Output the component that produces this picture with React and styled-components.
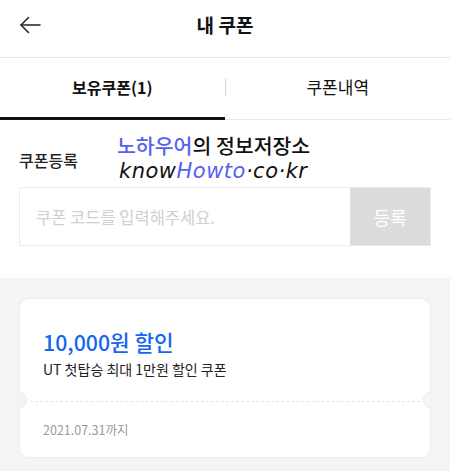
import React from "react";
import styled, { createGlobalStyle } from "styled-components";

const Global = createGlobalStyle`
  html, body { margin: 0; padding: 0; background: #f4f4f4; }
  body { font-family: "Noto Sans CJK KR", "Noto Sans", sans-serif; color: #111; }
  * { box-sizing: border-box; }
`;

const Page = styled.div`
  width: 450px;
  min-height: 471px;
  background: #f4f4f4;
  display: flex;
  flex-direction: column;
`;

const Header = styled.header`
  height: 58px;
  background: #fff;
  border-bottom: 1px solid #e6e6e6;
  display: flex;
  align-items: center;
  justify-content: center;
  position: relative;
`;

const BackButton = styled.button`
  position: absolute;
  left: 16px;
  top: 11px;
  width: 28px;
  height: 28px;
  padding: 0;
  border: 0;
  background: none;
  display: flex;
  align-items: center;
  justify-content: center;
`;

const Title = styled.h1`
  margin: 0 0 9px;
  font-size: 19px;
  font-weight: 700;
  color: #111;
`;

const Tabs = styled.nav`
  height: 62px;
  background: #fff;
  display: flex;
  align-items: stretch;
  position: relative;
  border-bottom: 1px solid #e8e8e8;
`;

const Tab = styled.div`
  flex: 1;
  display: flex;
  align-items: center;
  justify-content: center;
  font-size: ${(p) => (p.$active ? "16px" : "17px")};
  padding-bottom: 2px;
  font-weight: ${(p) => (p.$active ? 700 : 400)};
  color: #111;
  border-bottom: 3px solid ${(p) => (p.$active ? "#111" : "transparent")};
  margin-bottom: -1px;
`;

const TabDivider = styled.span`
  width: 1px;
  height: 18px;
  background: #d8d8d8;
  align-self: center;
  margin-top: -3px;
`;

const Register = styled.section`
  background: #fff;
  padding: 30px 19px 32px;
  position: relative;
`;

const Label = styled.div`
  font-size: 16px;
  font-weight: 500;
  color: #222;
  line-height: 20px;
  margin-bottom: 17px;
`;

const Watermark = styled.div`
  position: absolute;
  left: 117px;
  top: 11px;
  display: flex;
  flex-direction: column;
  align-items: flex-start;
  pointer-events: none;
`;

const WmTop = styled.div`
  font-size: 20.5px;
  line-height: 28px;
  color: #111;
  font-weight: 500;
`;

const WmBlue = styled.span`
  color: #5661f0;
`;

const WmBottom = styled.div`
  font-family: "DejaVu Sans", sans-serif;
  font-style: italic;
  font-weight: 300;
  font-size: 21px;
  line-height: 24px;
  letter-spacing: 0.5px;
  color: #111;
  margin-left: 2px;
`;

const InputRow = styled.div`
  display: flex;
  height: 59px;
  border: 1px solid #ececec;
`;

const Input = styled.input`
  flex: 1;
  border: 0;
  outline: none;
  padding: 0 16px;
  font-family: inherit;
  font-size: 16.5px;
  color: #111;
  &::placeholder { color: #cfcfcf; }
`;

const SubmitButton = styled.button`
  width: 80px;
  border: 0;
  background: #dcdcdc;
  color: #fff;
  font-family: inherit;
  font-size: 18px;
`;

const CouponList = styled.section`
  padding: 20px 19px 15px;
`;

const Card = styled.article`
  background: #fff;
  border: 1px solid #ececec;
  border-radius: 10px;
  position: relative;
`;

const CardTop = styled.div`
  height: 102px;
  padding: 29px 23px 0;
`;

const Amount = styled.div`
  font-size: 21.3px;
  font-weight: 500;
  color: #1566f0;
  line-height: 28px;
`;

const Desc = styled.div`
  font-size: 14px;
  color: #222;
  line-height: 20px;
  margin-top: 3px;
`;

const Perforation = styled.div`
  border-top: 1px dashed #e4e4e4;
  margin: 0 10px;
`;

const Notch = styled.span`
  position: absolute;
  top: 93px;
  ${(p) => (p.$side === "left" ? "left: -9px;" : "right: -9px;")}
  width: 16px;
  height: 16px;
  border-radius: 50%;
  background: #f4f4f4;
  border: 1px solid #e8e8e8;
  clip-path: ${(p) => (p.$side === "left" ? "inset(0 0 0 8px)" : "inset(0 8px 0 0)")};
`;

const NotchCover = styled.span`
  position: absolute;
  top: 93px;
  ${(p) => (p.$side === "left" ? "left: -2px;" : "right: -2px;")}
  width: 2px;
  height: 16px;
  background: #f4f4f4;
`;

const CardBottom = styled.div`
  height: 55px;
  padding: 0 23px;
  display: flex;
  align-items: center;
  font-size: 12.5px;
  color: #9a9a9a;
`;

export default function App() {
  return (
    <>
      <Global />
      <Page>
        <Header>
          <BackButton aria-label="back">
            <svg width="22" height="18" viewBox="0 0 22 18" fill="none" stroke="#222" strokeWidth="1.5" strokeLinecap="round" strokeLinejoin="round">
              <path d="M21 9H2" />
              <path d="M9.5 1.5L2 9l7.5 7.5" />
            </svg>
          </BackButton>
          <Title>내 쿠폰</Title>
        </Header>
        <Tabs>
          <Tab $active>보유쿠폰(1)</Tab>
          <TabDivider />
          <Tab>쿠폰내역</Tab>
        </Tabs>
        <Register>
          <Label>쿠폰등록</Label>
          <Watermark>
            <WmTop>
              <WmBlue>노하우어</WmBlue>의 정보저장소
            </WmTop>
            <WmBottom>
              know<WmBlue>Howto</WmBlue>·co·kr
            </WmBottom>
          </Watermark>
          <InputRow>
            <Input placeholder="쿠폰 코드를 입력해주세요." />
            <SubmitButton>등록</SubmitButton>
          </InputRow>
        </Register>
        <CouponList>
          <Card>
            <CardTop>
              <Amount>10,000원 할인</Amount>
              <Desc>UT 첫탑승 최대 1만원 할인 쿠폰</Desc>
            </CardTop>
            <Perforation />
            <CardBottom>2021.07.31까지</CardBottom>
            <NotchCover $side="left" />
            <NotchCover $side="right" />
            <Notch $side="left" />
            <Notch $side="right" />
          </Card>
        </CouponList>
      </Page>
    </>
  );
}
